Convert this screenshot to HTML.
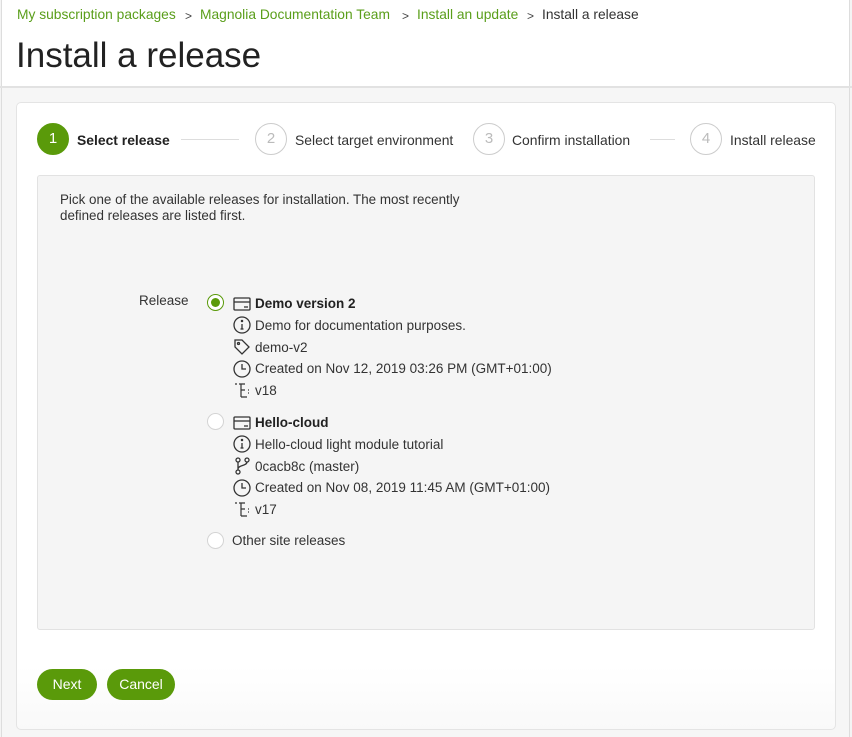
<!DOCTYPE html>
<html><head><meta charset="utf-8">
<style>
*{margin:0;padding:0;box-sizing:border-box}
body{width:852px;height:737px;background:#f4f4f4;font-family:"Liberation Sans",sans-serif;color:#333;position:relative;overflow:hidden}
.a{position:absolute;white-space:nowrap}
#wrap{position:absolute;left:1px;top:0;width:849px;height:737px;background:#fff;border-left:1px solid #ddd;border-right:1px solid #ddd}
#hdrline{position:absolute;left:0;top:86px;width:852px;height:2px;background:#e2e2e2}
#below{position:absolute;left:1px;top:88px;width:849px;height:649px;background:#f6f6f6;border-left:1px solid #ddd;border-right:1px solid #ddd}
.bc{font-size:13.8px;top:7px;color:#5a9e1a}
.sep{color:#444;font-size:12px;top:9px}
#card{position:absolute;left:16px;top:102px;width:820px;height:628px;background:linear-gradient(#fff 90%,#f9f9f9);border:1px solid #e4e4e4;border-radius:5px}
.circ{position:absolute;width:32px;height:32px;border-radius:50%;border:1.5px solid #ccc;color:#bbb;font-size:15px;text-align:center;line-height:29px}
.stl{font-size:13.9px;color:#333;top:132px}
.ln{position:absolute;height:1px;background:#ddd;top:139px}
#gray{position:absolute;left:37px;top:175px;width:778px;height:455px;background:#f5f5f5;border:1px solid #e2e2e2;border-radius:3px}
.t{font-size:13.5px;color:#333}
.radio{position:absolute;width:17px;height:17px;border-radius:50%;border:1px solid #d4d4d4;background:#fff}
.ic{position:absolute;width:18px;height:18px}
.btn{position:absolute;top:669px;height:31px;border-radius:16px;background:#5a9a0a;color:#fff;font-size:14px;text-align:center;line-height:31px}
</style></head><body>
<div id="wrap"></div>
<div id="below"></div>
<div id="hdrline"></div>
<div class="a bc" style="left:17px">My subscription packages</div>
<div class="a bc sep" style="left:185px">&gt;</div>
<div class="a bc" style="left:200px">Magnolia Documentation Team</div>
<div class="a bc sep" style="left:402px">&gt;</div>
<div class="a bc" style="left:417px">Install an update</div>
<div class="a bc sep" style="left:527px">&gt;</div>
<div class="a bc" style="left:542px;color:#333">Install a release</div>
<div class="a" style="left:16px;top:36px;font-size:35px;color:#222">Install a release</div>

<div id="card"></div>
<div class="circ" style="left:37px;top:123px;background:#5a9a0a;border-color:#5a9a0a;color:#fff">1</div>
<div class="a stl" style="left:77px;font-weight:bold;color:#222">Select release</div>
<div class="ln" style="left:181px;width:58px"></div>
<div class="circ" style="left:255px;top:123px">2</div>
<div class="a stl" style="left:295px">Select target environment</div>
<div class="circ" style="left:473px;top:123px">3</div>
<div class="a stl" style="left:512px">Confirm installation</div>
<div class="ln" style="left:650px;width:25px"></div>
<div class="circ" style="left:690px;top:123px">4</div>
<div class="a stl" style="left:730px">Install release</div>

<div id="gray"></div>
<div class="a t" style="left:60px;top:192px;font-size:13.4px;line-height:16px">Pick one of the available releases for installation. The most recently<br>defined releases are listed first.</div>
<div class="a t" style="left:139px;top:293px">Release</div>

<div class="radio" style="left:207px;top:294px;border-color:#5a9a0a"><div style="position:absolute;left:3px;top:3px;width:9px;height:9px;border-radius:50%;background:#5a9a0a"></div></div>
<svg class="ic" style="left:233px;top:295px" viewBox="0 0 18 18" fill="none" stroke="#333" stroke-width="1.3"><rect x="1" y="3" width="16" height="12" rx="1"/><line x1="1" y1="7" x2="17" y2="7"/><line x1="11" y1="12" x2="15" y2="12"/></svg>
<div class="a t" style="left:255px;top:296px;font-weight:bold;color:#222">Demo version 2</div>
<svg class="ic" style="left:233px;top:316px" viewBox="0 0 18 18" fill="none" stroke="#333" stroke-width="1.3"><circle cx="9" cy="9" r="8"/><line x1="9" y1="8" x2="9" y2="13"/><line x1="7.5" y1="13" x2="10.5" y2="13"/><circle cx="9" cy="5" r=".6" fill="#333"/></svg>
<div class="a t" style="left:255px;top:318px">Demo for documentation purposes.</div>
<svg class="ic" style="left:233px;top:338px" viewBox="0 0 18 18" fill="none" stroke="#333" stroke-width="1.3"><path d="M2 2h7l7 7-7 7-7-7z"/><circle cx="5.5" cy="5.5" r="1"/></svg>
<div class="a t" style="left:255px;top:340px">demo-v2</div>
<svg class="ic" style="left:233px;top:360px" viewBox="0 0 18 18" fill="none" stroke="#333" stroke-width="1.3"><circle cx="9" cy="9" r="8"/><path d="M9 4v5h4"/></svg>
<div class="a t" style="left:255px;top:361px">Created on Nov 12, 2019 03:26 PM (GMT+01:00)</div>
<svg class="ic" style="left:233px;top:381px" viewBox="0 0 18 18" fill="none" stroke="#333" stroke-width="1.2"><path d="M2 3h2M6 3h6M8 3v13M8 9h4M8 16h6M15 9h1M15 12h1"/></svg>
<div class="a t" style="left:255px;top:383px">v18</div>

<div class="radio" style="left:207px;top:413px"></div>
<svg class="ic" style="left:233px;top:414px" viewBox="0 0 18 18" fill="none" stroke="#333" stroke-width="1.3"><rect x="1" y="3" width="16" height="12" rx="1"/><line x1="1" y1="7" x2="17" y2="7"/><line x1="11" y1="12" x2="15" y2="12"/></svg>
<div class="a t" style="left:255px;top:415px;font-weight:bold;color:#222">Hello-cloud</div>
<svg class="ic" style="left:233px;top:435px" viewBox="0 0 18 18" fill="none" stroke="#333" stroke-width="1.3"><circle cx="9" cy="9" r="8"/><line x1="9" y1="8" x2="9" y2="13"/><line x1="7.5" y1="13" x2="10.5" y2="13"/><circle cx="9" cy="5" r=".6" fill="#333"/></svg>
<div class="a t" style="left:255px;top:437px">Hello-cloud light module tutorial</div>
<svg class="ic" style="left:233px;top:457px" viewBox="0 0 18 18" fill="none" stroke="#333" stroke-width="1.3"><circle cx="5" cy="3" r="2"/><circle cx="14" cy="3" r="2"/><circle cx="5" cy="15" r="2"/><path d="M5 5v8M14 5c0 4-9 3-9 7"/></svg>
<div class="a t" style="left:255px;top:459px">0cacb8c (master)</div>
<svg class="ic" style="left:233px;top:479px" viewBox="0 0 18 18" fill="none" stroke="#333" stroke-width="1.3"><circle cx="9" cy="9" r="8"/><path d="M9 4v5h4"/></svg>
<div class="a t" style="left:255px;top:480px">Created on Nov 08, 2019 11:45 AM (GMT+01:00)</div>
<svg class="ic" style="left:233px;top:500px" viewBox="0 0 18 18" fill="none" stroke="#333" stroke-width="1.2"><path d="M2 3h2M6 3h6M8 3v13M8 9h4M8 16h6M15 9h1M15 12h1"/></svg>
<div class="a t" style="left:255px;top:502px">v17</div>

<div class="radio" style="left:207px;top:532px"></div>
<div class="a t" style="left:232px;top:533px">Other site releases</div>

<div class="btn" style="left:37px;width:60px">Next</div>
<div class="btn" style="left:107px;width:68px">Cancel</div>
</body></html>
